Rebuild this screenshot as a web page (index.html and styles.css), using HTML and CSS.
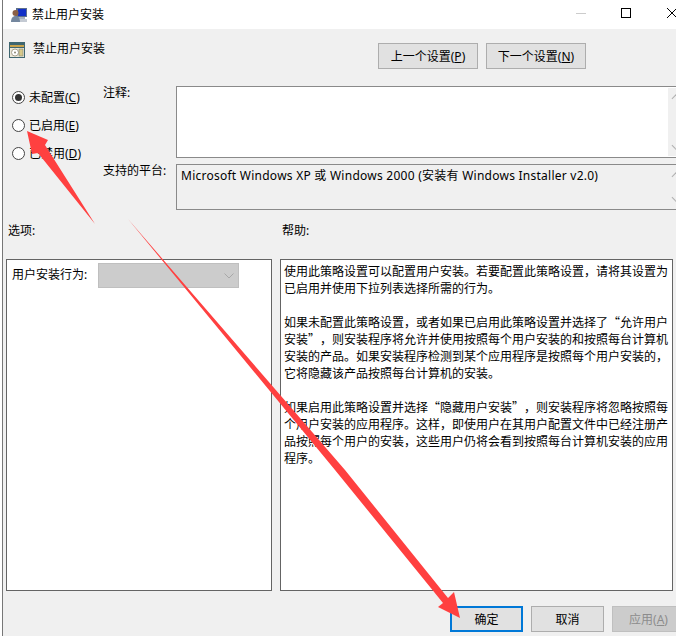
FILE: index.html
```html
<!DOCTYPE html>
<html lang="zh-CN">
<head>
  <meta charset="UTF-8" />
  <title>禁止用户安装</title>
  <link rel="stylesheet" href="styles.css">
</head>
<body>
  <div class="window">

    <!-- Title bar -->
    <div class="titlebar">
      <svg class="title-icon" width="16" height="16" viewBox="0 0 16 16">
        <rect x="5" y="1" width="11" height="9" fill="#5d6f8c"/>
        <rect x="7" y="2" width="8" height="7" fill="#1230c8"/>
        <rect x="7" y="10" width="7" height="2" fill="#a9b2bf"/>
        <rect x="4" y="12" width="12" height="3" fill="#c4cad3"/>
        <circle cx="4.500" cy="6" r="3" fill="#8a5f45"/>
        <path d="M0 15c0-4 2-6 4.500-6s4.500 2 4.500 6z" fill="#74879e"/>
      </svg>
      <span class="title-text">禁止用户安装</span>
      <div class="window-controls">
        <svg width="10" height="10" viewBox="0 0 10 10"><path d="M0 5.500h10" stroke="#ccc"/></svg>
        <svg width="10" height="10" viewBox="0 0 10 10"><rect x=".5" y=".5" width="9" height="9" fill="none" stroke="#000"/></svg>
        <svg width="10" height="10" viewBox="0 0 10 10"><path d="M0 0l10 10M10 0L0 10" stroke="#000" fill="none"/></svg>
      </div>
    </div>

    <!-- Policy name and prev/next -->
    <div class="header">
      <svg class="policy-icon" width="16" height="16" viewBox="0 0 16 16">
        <rect width="16" height="16" fill="#3f6670"/>
        <rect x="1" y="3" width="14" height="2" fill="#c9a24a"/>
        <rect x="1" y="6" width="14" height="9" fill="#ece8d8"/>
        <circle cx="6" cy="10.500" r="3.500" fill="#fff" stroke="#a8a08c"/>
        <circle cx="6" cy="10.500" r="1" fill="#8c8672"/>
        <rect x="10" y="7" width="4" height="7" fill="#d8c98a" stroke="#6d7a70" stroke-width=".5"/>
      </svg>
      <span class="policy-name">禁止用户安装</span>
      <div class="nav-buttons">
        <button class="btn nav-btn">上一个设置(<u>P</u>)</button>
        <button class="btn nav-btn">下一个设置(<u>N</u>)</button>
      </div>
    </div>

    <!-- State radios, comment, platform -->
    <div class="settings">
      <div class="radios">
        <label class="radio-row"><span class="radio checked"></span><span>未配置(<u>C</u>)</span></label>
        <label class="radio-row"><span class="radio"></span><span>已启用(<u>E</u>)</span></label>
        <label class="radio-row"><span class="radio"></span><span>已禁用(<u>D</u>)</span></label>
      </div>
      <div class="fields">
        <span class="field-label">注释:</span>
        <div class="textbox comment-box">
          <div class="scrollbar"><span class="chev up"></span><span class="chev down"></span></div>
        </div>
        <span class="field-label">支持的平台:</span>
        <div class="textbox platform-box">
          <span class="platform-text">Microsoft Windows XP 或 Windows 2000 (安装有 Windows Installer v2.0)</span>
          <div class="scrollbar"><span class="chev up"></span><span class="chev down"></span></div>
        </div>
      </div>
    </div>

    <div class="section-labels">
      <span class="options-label">选项:</span>
      <span class="help-label">帮助:</span>
    </div>

    <div class="panels">
      <div class="panel options-panel">
        <span class="combo-label">用户安装行为:</span>
        <div class="combo">
          <svg width="10" height="6" viewBox="0 0 10 6"><path d="M.5.500L5 5l4.500-4.500" fill="none" stroke="#a8a8a8"/></svg>
        </div>
      </div>
      <div class="panel help-panel">
        <p>使用此策略设置可以配置用户安装。若要配置此策略设置，请将其设置为已启用并使用下拉列表选择所需的行为。</p>
        <p>如果未配置此策略设置，或者如果已启用此策略设置并选择了“允许用户安装”，则安装程序将允许并使用按照每个用户安装的和按照每台计算机安装的产品。如果安装程序检测到某个应用程序是按照每个用户安装的，它将隐藏该产品按照每台计算机的安装。</p>
        <p>如果启用此策略设置并选择“隐藏用户安装”，则安装程序将忽略按照每个用户安装的应用程序。这样，即使用户在其用户配置文件中已经注册产品按照每个用户的安装，这些用户仍将会看到按照每台计算机安装的应用程序。</p>
      </div>
    </div>

    <div class="footer">
      <button class="btn foot-btn default">确定</button>
      <button class="btn foot-btn">取消</button>
      <button class="btn foot-btn disabled">应用(<u>A</u>)</button>
    </div>
  </div>

  <!-- Red annotation arrows drawn over the dialog -->
  <svg class="arrows" width="676" height="636" viewBox="0 0 676 636">
    <polygon points="27,131 48,140 45,145 95,224 38,153 32,154"/>
    <polygon points="128,219 345,470 448,598 454,592 460,618 438,607 443,603 335,470"/>
  </svg>
</body>
</html>
```

FILE: styles.css
```css
* { margin: 0; padding: 0; box-sizing: border-box; }

html, body {
  width: 676px;
  height: 636px;
  overflow: hidden;
  background: #fff;
}

body {
  position: relative;
  padding-left: 2px;
  font-family: "Noto Sans", "Noto Sans CJK SC", sans-serif;
  font-size: 12px;
  line-height: 17px;
  color: #000;
}

.window {
  width: 674px;
  height: 636px;
  border-left: 1px solid #777;
  background: #f0f0f0;
  overflow: hidden;
}

.titlebar {
  display: flex;
  align-items: center;
  height: 29px;
  background: #fff;
}

.title-icon {
  margin-left: 8px;
}

.title-text {
  margin-left: 5px;
}

.window-controls {
  display: flex;
  flex-shrink: 0;
  align-items: center;
  gap: 35px;
  margin-left: auto;
  margin-right: -1px;
  padding-bottom: 3px;
}

.window-controls svg {
  flex-shrink: 0;
}

.window-controls svg:last-child {
  margin-left: 1px;
}

.header {
  display: flex;
  align-items: flex-start;
  height: 57px;
  padding: 14px 90px 0 6px;
}

.policy-icon {
  flex-shrink: 0;
  margin-top: -1px;
}

.policy-name {
  margin-left: 8px;
  margin-top: -3px;
}

.nav-buttons {
  display: flex;
  gap: 8px;
  margin-left: auto;
}

.btn {
  font: inherit;
  color: #000;
  background: #e1e1e1;
  border: 1px solid #adadad;
  flex-shrink: 0;
}

.nav-btn {
  width: 100px;
  height: 26px;
}

.settings {
  display: flex;
  height: 136px;
}

.radios {
  display: flex;
  flex-direction: column;
  flex-shrink: 0;
  gap: 6px;
  width: 100px;
  padding-left: 9px;
}

.radio-row {
  display: flex;
  align-items: center;
  gap: 4px;
  height: 22px;
}

.radio {
  display: flex;
  align-items: center;
  justify-content: center;
  width: 13px;
  height: 13px;
  border: 1px solid #444;
  border-radius: 50%;
  background: #fff;
}

.radio.checked::after {
  content: '';
  width: 7px;
  height: 7px;
  border-radius: 50%;
  background: #333;
}

.fields {
  display: grid;
  flex-shrink: 0;
  grid-template-columns: 73px 510px;
  grid-template-rows: 72px 46px;
  row-gap: 6px;
}

.field-label {
  line-height: 14px;
}

.textbox {
  position: relative;
  border: 1px solid #8a8a8a;
  border-right: none;
}

.comment-box {
  background: #fff;
}

.platform-box {
  background: #f0f0f0;
  padding: 2px 0 0 4px;
}

.platform-text {
  letter-spacing: .25px;
}

.scrollbar {
  position: absolute;
  top: 1px;
  bottom: 1px;
  left: 491px;
  width: 18px;
  background: #f0f0f0;
}

.chev {
  position: absolute;
  left: 5px;
  width: 7px;
  height: 7px;
  border-left: 1px solid #b0b0b0;
  border-top: 1px solid #b0b0b0;
}

.chev.up {
  top: 7px;
  transform: rotate(45deg);
}

.chev.down {
  bottom: 7px;
  transform: rotate(225deg);
}

.section-labels {
  display: flex;
  height: 37px;
  padding-left: 5px;
}

.options-label {
  width: 274px;
}

.panels {
  display: flex;
  gap: 8px;
  height: 332px;
  padding-left: 3px;
}

.panel {
  background: #fff;
  border: 1px solid #646464;
}

.options-panel {
  display: flex;
  align-items: flex-start;
  width: 266px;
  padding: 3px 0 0 5px;
}

.combo-label {
  width: 86px;
  line-height: 24px;
}

.combo {
  display: flex;
  align-items: center;
  justify-content: flex-end;
  width: 141px;
  height: 25px;
  padding-right: 4px;
  background: #ccc;
  border: 1px solid #bfbfbf;
}

.help-panel {
  width: 393px;
  padding: 2px 3px;
  font-family: "Noto Sans CJK SC", sans-serif;
  text-spacing-trim: space-all;
}

.help-panel p {
  margin-bottom: 17px;
}

.footer {
  display: flex;
  gap: 8px;
  padding: 15px 0 0 447px;
}

.foot-btn {
  width: 73px;
  height: 26px;
}

.foot-btn.default {
  border: 2px solid #0078d7;
}

.foot-btn.disabled {
  background: #ccc;
  border-color: #bfbfbf;
  color: #8c8c8c;
}

.arrows {
  position: absolute;
  top: 0;
  left: 0;
  pointer-events: none;
}

.arrows polygon {
  fill: #ff4040;
}
```
